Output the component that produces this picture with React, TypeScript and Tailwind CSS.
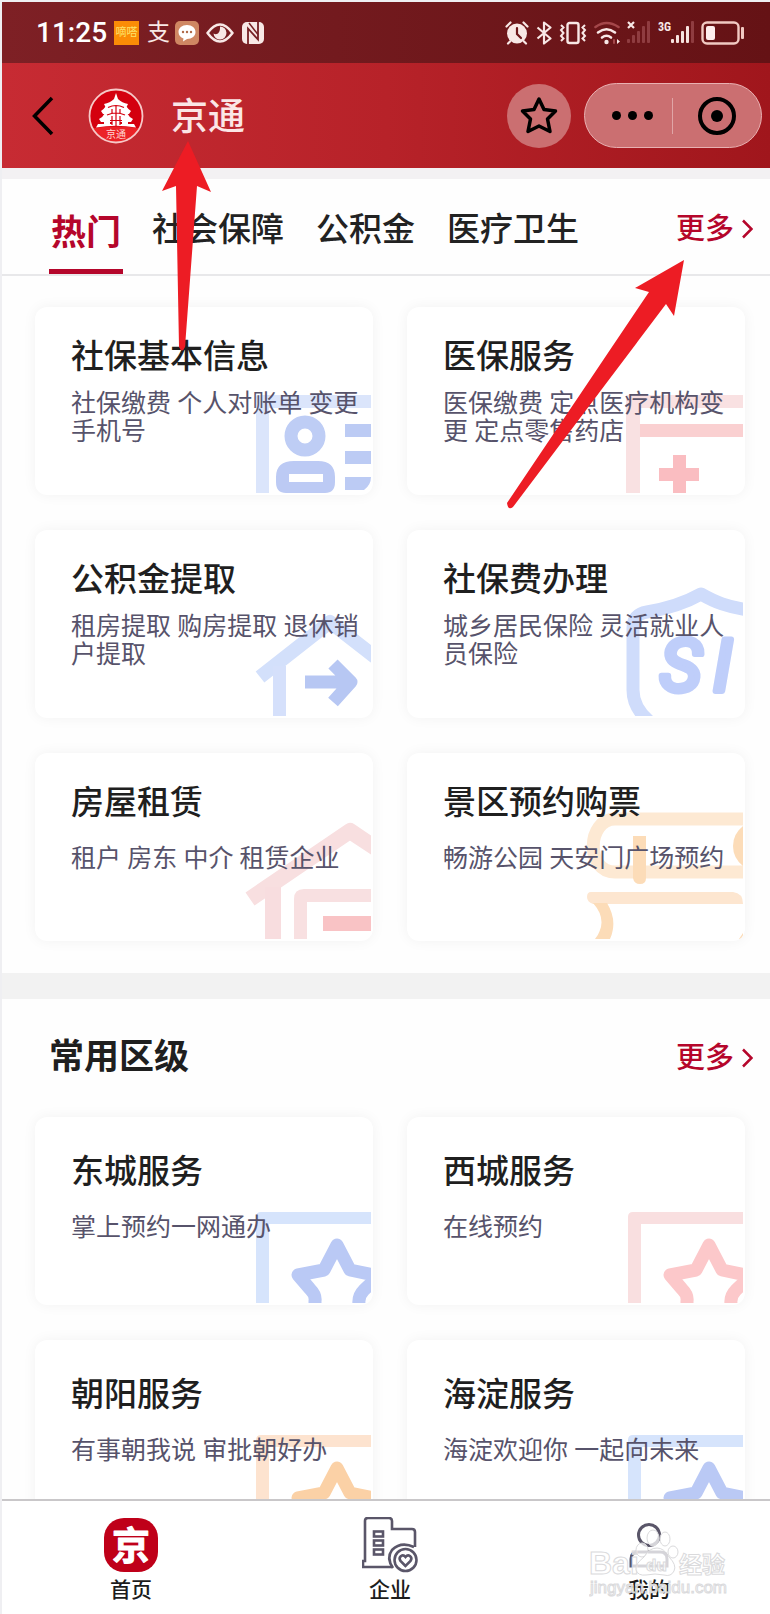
import type { ReactNode } from 'react';

type Service = {
  title: string;
  desc: string;
  art: ReactNode;
  twoLines?: boolean;
};

/* ---------- card illustrations, all drawn in the same 170x140 box ---------- */

const Art = ({ children }: { children: ReactNode }) => (
  <svg viewBox="-20 -24 170 140" className="absolute right-[2px] bottom-[2px] w-[170px] h-[140px]" fill="none" aria-hidden="true">
    {children}
  </svg>
);

const IdCardArt = () => (
  <Art>
    <path d="M35 116V20q0-2 2-2h113v13H48v85z" fill="#dbe5fb" />
    <circle cx="84" cy="59" r="14" stroke="#becdf5" strokeWidth="13" />
    <path d="M73 84h24q17 0 17 16v5q0 11-10 11H65q-10 0-10-11v-5q0-16 18-16zM68 97v8h34v-8z" fill="#bccaf4" fillRule="evenodd" />
    <path d="M124 47h26v13h-26zM124 74h26v13h-26zM124 100h26q0 8-7 13h-19z" fill="#bccbf4" />
  </Art>
);

const MedicalArt = () => (
  <Art>
    <path d="M33 116V20q0-2 2-2h115v13H47v85z" fill="#f9e1e2" />
    <path d="M47 47h103v13H47z" fill="#fad0d1" />
    <path d="M80 78h13v13h13v13H93v12H80v-12H66V91h14z" fill="#fabdc1" />
  </Art>
);

const HouseArrowArt = () => (
  <Art>
    <path d="M39 77 L109 22 L154 57" stroke="#d3e0fb" strokeWidth="14" strokeLinejoin="round" />
    <path d="M52 66h13v50H52z" fill="#d5e0fb" />
    <path d="M84 82h44M112 64l18 18-18 20" stroke="#b7c7f3" strokeWidth="13" strokeLinejoin="round" />
  </Art>
);

const ShieldArt = () => (
  <Art>
    <path d="M156 10C134 7 122 2 108-6 92 3 72 9 54 12 43 14 40 19 40 28v62q0 18 17 32" stroke="#cfdcfb" strokeWidth="13" strokeLinejoin="round" />
    <text x="67 120" y="91" fontSize="72" fontStyle="italic" fill="#bfcefa" stroke="#bfcefa" strokeWidth="6" strokeLinejoin="round">SI</text>
  </Art>
);

const RentArt = () => (
  <Art>
    <path d="M29 76 L129 8 L156 26" stroke="#f8dfe0" strokeWidth="16" strokeLinejoin="round" />
    <path d="M44 64h16v52H44z" fill="#f8dddf" />
    <path d="M73 116V76q0-10 10-10h67v13H86v37z" fill="#f8e0e1" />
    <path d="M102 93h48v15h-48z" fill="#f9c3c5" />
  </Art>
);

const BooksArt = () => (
  <Art>
    <path d="M156-4H22C-6-4-8 49 22 49h134" stroke="#fde9d3" strokeWidth="13" />
    <path d="M150 3q-10 8-10 20t10 20z" fill="#fcdcb8" />
    <path d="M40 13h13v42q0 6-6 6t-7-6z" fill="#fcdcb8" />
    <path d="M-2 69H140q10 1 10 12H0q-6-2-6-7 0-5 4-5z" fill="#fde6d0" />
    <path d="M0 80Q16 98 2 116H17Q25 98 14 80z" fill="#fcdcb8" />
    <path d="M150 110v6h-4z" fill="#fcdcb8" />
  </Art>
);

const StarArt = ({ frame, star }: { frame: string; star: string }) => (
  <Art>
    <path d="M35 116V30q0-5 5-5h110v12H48v79z" fill={frame} />
    <path
      d="M116 58 L129 83 L158 89 L143 103 Q137 109 138 117 V126 M94 126 V114 Q95 108 89 102 L77 88 L103 83 L116 58 L129 83"
      stroke={star}
      strokeWidth="13"
      strokeLinejoin="round"
    />
  </Art>
);

const hotServices: Service[] = [
  { title: '社保基本信息', desc: '社保缴费 个人对账单 变更手机号', art: <IdCardArt />, twoLines: true },
  { title: '医保服务', desc: '医保缴费 定点医疗机构变更 定点零售药店', art: <MedicalArt />, twoLines: true },
  { title: '公积金提取', desc: '租房提取 购房提取 退休销户提取', art: <HouseArrowArt />, twoLines: true },
  { title: '社保费办理', desc: '城乡居民保险 灵活就业人员保险', art: <ShieldArt />, twoLines: true },
  { title: '房屋租赁', desc: '租户 房东 中介 租赁企业', art: <RentArt /> },
  { title: '景区预约购票', desc: '畅游公园 天安门广场预约', art: <BooksArt /> },
];

const districtServices: Service[] = [
  { title: '东城服务', desc: '掌上预约一网通办', art: <StarArt frame="#d6e4fc" star="#bac9f5" /> },
  { title: '西城服务', desc: '在线预约', art: <StarArt frame="#f9dfe0" star="#fcc8ca" /> },
  { title: '朝阳服务', desc: '有事朝我说 审批朝好办', art: <StarArt frame="#fde3cf" star="#fbd1a6" /> },
  { title: '海淀服务', desc: '海淀欢迎你 一起向未来', art: <StarArt frame="#d6e4fc" star="#bac9f5" /> },
];

const tabs = ['热门', '社会保障', '公积金', '医疗卫生'];

/* ---------- status bar ---------- */

const SignalBars = ({ active }: { active: number }) => (
  <>
    {[18, 14, 10, 5, 0].map((y, i) => (
      <rect key={y} x={i * 5} y={y} width="3" height={22 - y} rx="1" fill={i < active ? '#f7e3df' : '#8f3c40'} />
    ))}
  </>
);

const StatusBar = () => (
  <div className="flex h-[61px] shrink-0 items-center justify-between bg-linear-to-r from-[#7e2025] to-[#651215] pl-[34px] pr-[25px] text-[#f8e8e6]">
    <div className="flex items-center">
      <span className="text-[28px] leading-8 font-medium text-white">11:25</span>
      <span className="ml-[7px] flex h-6 w-[25px] items-center justify-center bg-[#fb8c06] text-[11px] leading-6 text-[#fbe36b]">嘀嗒</span>
      <span className="ml-2 text-[23px] leading-6">支</span>
      <svg className="ml-[5px] h-6 w-6" viewBox="0 0 24 24" aria-hidden="true">
        <rect width="24" height="24" rx="5" fill="#cf8763" />
        <path d="M12 4c5 0 8.500 3 8.500 7s-3.500 7-8.500 7l-4 2.500.5-3C5.500 16.500 3.500 14 3.500 11c0-4 3.500-7 8.500-7z" fill="#fff" />
        <circle cx="8" cy="11" r="1.200" fill="#b06a48" />
        <circle cx="12" cy="11" r="1.200" fill="#b06a48" />
        <circle cx="16" cy="11" r="1.200" fill="#b06a48" />
      </svg>
      <svg className="ml-[7px] h-6 w-7" viewBox="0 0 28 24" fill="none" aria-hidden="true">
        <path d="M1.500 12Q14-5 26.500 12 14 29 1.500 12z" stroke="currentColor" strokeWidth="2.500" strokeLinejoin="round" />
        <path d="M14 5.500a6.500 6.500 0 1 1-6.500 7c3 2 7 0 6.500-7z" fill="currentColor" />
      </svg>
      <svg className="ml-[8px] h-[22px] w-[22px]" viewBox="0 0 22 22" aria-hidden="true">
        <rect width="22" height="22" rx="5" fill="currentColor" />
        <path d="M6 22V6.500l10 11V0" stroke="#762024" strokeWidth="1.800" fill="none" />
        <path d="M7 1l9 11.500" stroke="#762024" strokeWidth="1.500" fill="none" />
      </svg>
    </div>

    <div className="flex items-center gap-[7px]">
      <svg className="h-6 w-6" viewBox="0 0 24 24" fill="none" stroke="currentColor" strokeWidth="2.200" strokeLinecap="round" aria-hidden="true">
        <circle cx="12" cy="12.500" r="10" fill="currentColor" stroke="none" />
        <path d="M1.500 5.500l4-4M22.500 5.500l-4-4M5 20.500l-2 2M19 20.500l2 2" />
        <path d="M12 7v6l4 4" stroke="#6d171b" />
      </svg>
      <svg className="h-6 w-4" viewBox="0 0 16 24" fill="none" stroke="currentColor" strokeWidth="2.200" strokeLinejoin="round" aria-hidden="true">
        <path d="M1.500 6.500l13 11L8 22.500v-21l6.500 5-13 11" />
      </svg>
      <svg className="h-6 w-7" viewBox="0 0 28 24" fill="none" stroke="currentColor" strokeWidth="2.400" aria-hidden="true">
        <rect x="8.500" y="2" width="11" height="20" rx="2" />
        <path d="M2 4l2.500 2.500L2 9l2.500 3L2 15l2.500 2.500L2 20M26 4l-2.500 2.500L26 9l-2.500 3 2.500 3-2.500 2.500L26 20" strokeWidth="2" />
      </svg>
      <svg className="h-6 w-[26px]" viewBox="0 0 26 24" fill="none" strokeWidth="2.600" strokeLinecap="round" aria-hidden="true">
        <path d="M1.500 6q11-8 23 0" stroke="#a4474a" />
        <path d="M4 11.500q8.500-6.500 17 0M8 16.500q4.500-3.500 9 0" stroke="currentColor" />
        <circle cx="12.500" cy="21" r="2.200" fill="currentColor" />
        <path d="M20 19v3" stroke="#a4474a" strokeWidth="2" />
        <path d="M23 18l3 2.500-3 2.500z" fill="currentColor" />
      </svg>
      <svg className="h-6 w-6" viewBox="0 0 24 24" fill="none" aria-hidden="true">
        <SignalBars active={0} />
        <path d="M1 1l6 6M7 1L1 7" stroke="currentColor" strokeWidth="2.200" />
      </svg>
      <svg className="h-6 w-9" viewBox="0 0 36 24" fill="none" aria-hidden="true">
        <text x="0" y="10" fontSize="12" fontWeight="700" fill="currentColor" fontFamily="Roboto Condensed, Roboto">3G</text>
        <g transform="translate(13 0)">
          <SignalBars active={4} />
        </g>
      </svg>
      <svg className="h-6 w-[44px]" viewBox="0 0 44 24" fill="none" aria-hidden="true">
        <rect x="1.500" y="1.500" width="36" height="21" rx="4.500" stroke="#f1c9c2" strokeWidth="2.400" />
        <rect x="5" y="5" width="9" height="14" rx="2" fill="#fdeeee" />
        <rect x="40" y="6" width="3" height="12" rx="1" fill="#f1c9c2" />
      </svg>
    </div>
  </div>
);

/* ---------- title bar ---------- */

const PagodaLogo = () => (
  <svg className="h-14 w-14" viewBox="0 0 56 56" aria-hidden="true">
    <defs>
      <clipPath id="logo-clip">
        <circle cx="28" cy="28" r="26" />
      </clipPath>
    </defs>
    <circle cx="28" cy="28" r="27" fill="#d4000f" />
    <path d="M0 41q28-5 56 0v17H0z" fill="#ec2227" clipPath="url(#logo-clip)" />
    <circle cx="28" cy="28" r="26.500" fill="none" stroke="#f6c9c8" strokeWidth="1.800" />
    <g fill="#fff">
      <path d="M28 5l2 6q4 4 10 5l-1.500 3H17.500L16 16q6-1 10-5z" />
      <path d="M18 18h20q2 3 5 5l-2 3H15l-2-3q3-2 5-5z" />
      <path d="M17 25h22q2 4 6 6l-2 3H13l-2-3q4-2 6-6z" />
      <path d="M16 33h6v4h-6zM34 33h6v4h-6zM24 33h8v4h-8zM10 36h36l2 3.500Q28 36 8 39.500z" />
    </g>
    <path d="M20 19.500q8-4 16 0M19 27q9-4 18 0M22 32.500h12M28 18v20M24 21v4M32 21v4M24 28v9M32 28v9" stroke="#d4000f" strokeWidth="1.200" fill="none" />
    <text x="28" y="50" textAnchor="middle" fontSize="10" fill="#ffd6d3">京通</text>
  </svg>
);

const TitleBar = () => (
  <header className="flex h-[105px] shrink-0 items-center bg-linear-to-r from-[#c72b33] via-[#b72229] to-[#a0161c] pl-[30px] pr-2">
    <button type="button" aria-label="返回" className="text-black">
      <svg className="h-10 w-6" viewBox="0 0 24 40" fill="none" stroke="currentColor" strokeWidth="3.500" aria-hidden="true">
        <path d="M20 2L2.500 20 20 38" />
      </svg>
    </button>
    <div className="ml-8">
      <PagodaLogo />
    </div>
    <h1 className="ml-[27px] pt-1 text-[37px] leading-10 font-medium text-[#fbe6e6]">京通</h1>
    <button type="button" aria-label="收藏" className="ml-auto flex h-16 w-16 items-center justify-center rounded-full bg-[#cb6f71]">
      <svg className="h-10 w-10" viewBox="0 0 40 40" fill="none" stroke="#000" strokeWidth="3.500" strokeLinejoin="round" aria-hidden="true">
        <path d="M20 3l5 10.500 11.500 1.500-8 8 2.500 12.500L20 30 9 35.500 11.500 23l-8-8L15 13.500z" />
      </svg>
    </button>
    <div className="ml-[13px] flex h-[65px] w-[178px] items-center rounded-full border border-[#e9b1b2] bg-[#cb6f71]">
      <button type="button" aria-label="更多操作" className="flex h-full w-[87px] items-center justify-center gap-[7px] pl-2">
        <span className="h-[9px] w-[9px] rounded-full bg-black" />
        <span className="h-[9px] w-[9px] rounded-full bg-black" />
        <span className="h-[9px] w-[9px] rounded-full bg-black" />
      </button>
      <span className="h-9 w-px bg-[#e0a5a6]" />
      <button type="button" aria-label="关闭" className="flex h-full flex-1 items-center justify-center">
        <span className="flex h-[38px] w-[38px] items-center justify-center rounded-full border-4 border-black">
          <span className="h-3 w-3 rounded-full bg-black" />
        </span>
      </button>
    </div>
  </header>
);

/* ---------- content ---------- */

const MoreLink = () => (
  <a href="#more" className="flex items-center gap-2 text-[29px] leading-8 font-medium text-[#b5062b]">
    更多
    <svg className="h-5 w-[11px]" viewBox="0 0 11 20" fill="none" stroke="currentColor" strokeWidth="2.500" aria-hidden="true">
      <path d="M1 1.500l8.500 8.500L1 18.500" />
    </svg>
  </a>
);

const ServiceCard = ({ service, padding }: { service: Service; padding: string }) => (
  <a href="#service" className={`relative block h-[188px] overflow-hidden rounded-xl bg-white pl-9 pr-2 shadow-[0_0_14px_rgba(0,0,0,0.05)] ${padding}`}>
    {service.art}
    <h3 className="relative text-[33px] leading-10 font-medium text-[#1f1f1f]">{service.title}</h3>
    <p className={`relative text-[25px] leading-7 text-[#57536b] ${service.twoLines ? 'mt-[13px]' : 'mt-[22px]'}`}>{service.desc}</p>
  </a>
);

const ServiceGrid = ({ services, padding }: { services: Service[]; padding: string }) => (
  <div className="grid grid-cols-2 gap-x-[34px] gap-y-[35px] pl-[33px] pr-[25px]">
    {services.map((s) => (
      <ServiceCard key={s.title} service={s} padding={padding} />
    ))}
  </div>
);

/* ---------- bottom navigation ---------- */

const HomeIcon = () => (
  <svg className="h-14 w-14" viewBox="0 0 56 56" aria-hidden="true">
    <rect x="1" y="1" width="54" height="54" rx="20" fill="#bf0019" />
    <text x="28" y="42" textAnchor="middle" fontSize="38" fontWeight="700" fill="#fff" stroke="#fff" strokeWidth="1" strokeLinejoin="round">京</text>
  </svg>
);

const CompanyIcon = () => (
  <svg className="h-14 w-14" viewBox="0 0 56 56" fill="none" stroke="#5a5669" strokeWidth="2.600" aria-hidden="true">
    <path d="M30 50H1v-6h2V4q0-3 3-3h21q3 0 3 3v8h20q3 0 3 3v15" />
    <rect x="12" y="14.500" width="9" height="5" />
    <rect x="12" y="23.500" width="9" height="5" />
    <rect x="12" y="32.500" width="9" height="5" />
    <path d="M31 51q-7-10-1-18 9-9 22-3" />
    <circle cx="43.500" cy="43" r="11" />
    <path d="M43.500 49l-5-5q-2-3 .5-5 2.500-1.500 4.500 1 2-2.500 4.500-1 2.500 2 .5 5z" />
  </svg>
);

const MineIcon = () => (
  <svg className="h-14 w-14" viewBox="0 0 56 56" fill="none" stroke="#5a5669" strokeWidth="3" aria-hidden="true">
    <circle cx="28" cy="18" r="10.500" />
    <path d="M10 49V42q0-7 7-7h22q7 0 7 7v7z" />
  </svg>
);

const BottomNav = () => (
  <nav className="flex h-[115px] shrink-0 justify-between border-t-2 border-[#c9c7c9] bg-white pl-[97px] pr-[89px] pt-4">
    {[
      { label: '首页', icon: <HomeIcon /> },
      { label: '企业', icon: <CompanyIcon /> },
      { label: '我的', icon: <MineIcon /> },
    ].map((item) => (
      <a key={item.label} href="#nav" className="flex w-16 flex-col items-center gap-[3px] text-[21px] leading-7 font-medium text-[#1c1c1c]">
        {item.icon}
        {item.label}
      </a>
    ))}
  </nav>
);

/* ---------- things lying over the page ---------- */

const Watermark = () => (
  <svg className="pointer-events-none absolute right-[17px] bottom-3 h-[76px] w-[164px]" viewBox="0 0 164 76" aria-hidden="true">
    <g fill="#fff" fillOpacity="0.75" stroke="#dadadc" strokeWidth="1">
      <text x="0" y="48" fontSize="32" fontWeight="700" fontFamily="Liberation Sans">Bai</text>
      <ellipse cx="53" cy="24" rx="6" ry="7" />
      <ellipse cx="64" cy="12" rx="6" ry="8" />
      <ellipse cx="76" cy="13" rx="5" ry="7" />
      <ellipse cx="84" cy="26" rx="5" ry="6" />
      <path d="M68 22q7 0 12 9 8 8 5 14-3 6-10 4-9-2-18 0-8 1-10-5-1-6 8-13 5-9 13-9z" />
      <text x="57" y="45" fontSize="17" fontWeight="700" fontFamily="Liberation Sans">du</text>
      <text x="90" y="47" fontSize="23" fontWeight="700">经验</text>
      <text x="1" y="67" fontSize="17" fontFamily="Liberation Sans">jingyan.baidu.com</text>
    </g>
  </svg>
);

const Arrows = () => (
  <svg className="pointer-events-none absolute top-0 left-0 h-[520px] w-[700px]" viewBox="0 0 700 520" fill="#ed1c24" aria-hidden="true">
    <path d="M188 141 L211 192 L197 186 L185 347 Q182 354 179 347 L176 186 L162 191 Z" />
    <path d="M684 260 L674 316 L666 304 L513 507 Q508 511 507 503 L649 292 L635 288 Z" />
  </svg>
);

export default function App() {
  return (
    <div className="relative flex h-screen flex-col overflow-hidden bg-[#efeff2] pt-0.5 pl-0.5 font-['Roboto','Noto_Sans_CJK_SC',sans-serif]">
      <StatusBar />
      <TitleBar />
      <main className="min-h-0 flex-1 overflow-y-auto bg-[#fefefe] [scrollbar-width:none]">
        <div className="h-[11px] bg-[#f3f1f3]" />
        <div className="flex h-[97px] items-start border-b-2 border-[#e8e8ea] pr-[17px] pl-[47px]">
          {tabs.map((tab, i) =>
            i === 0 ? (
              <button key={tab} type="button" className="mr-[29px] h-[95px] w-[74px] border-b-[5px] border-[#b5062b] pt-5 text-[35px] leading-10 font-bold text-[#b5062b]">
                {tab}
              </button>
            ) : (
              <button key={tab} type="button" className="mr-8 h-[90px] pt-[11px] text-[33px] leading-10 font-medium whitespace-nowrap text-[#222]">
                {tab}
              </button>
            ),
          )}
          <div className="ml-auto flex h-24 items-center pt-1">
            <MoreLink />
          </div>
        </div>

        <section className="pt-[31px] pb-8">
          <ServiceGrid services={hotServices} padding="pt-[30px]" />
        </section>

        <div className="h-[26px] bg-[#f2f2f2]" />

        <section className="pb-8">
          <div className="flex h-[118px] items-center justify-between pr-[17px] pl-[47px]">
            <h2 className="text-[35px] leading-10 font-bold text-[#1f1f1f]">常用区级</h2>
            <MoreLink />
          </div>
          <ServiceGrid services={districtServices} padding="pt-[35px]" />
        </section>
      </main>
      <BottomNav />
      <Watermark />
      <Arrows />
    </div>
  );
}
